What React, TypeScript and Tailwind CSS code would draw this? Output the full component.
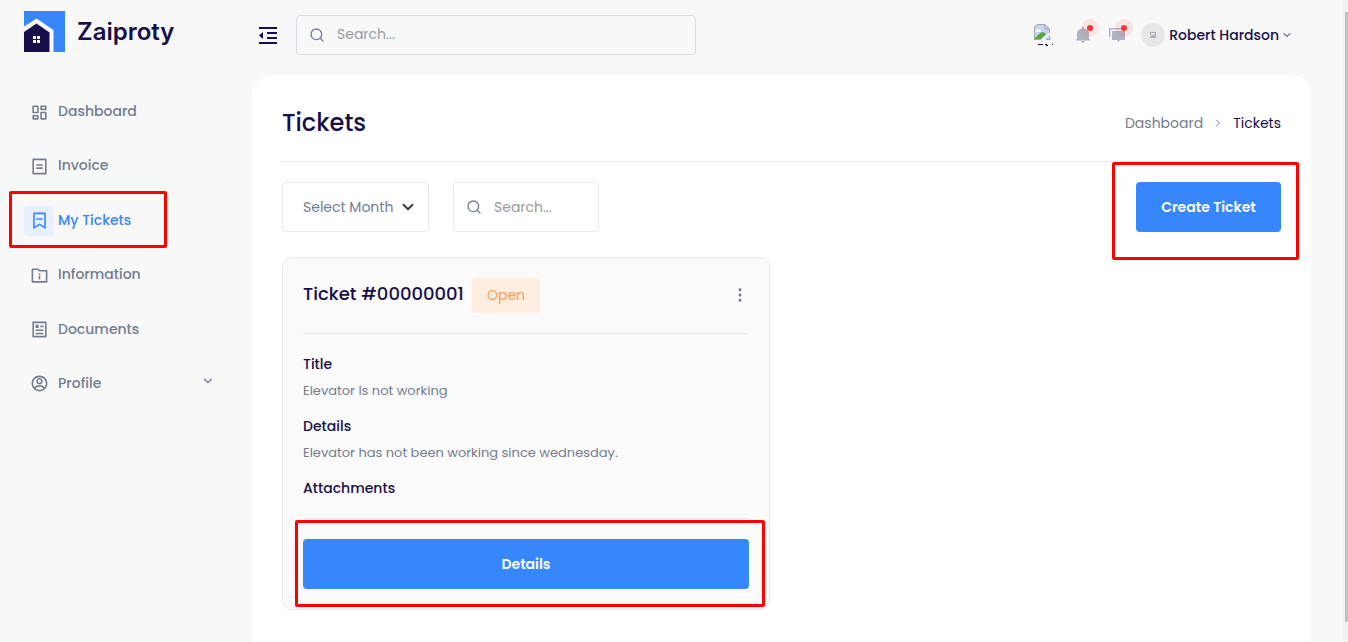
import React from "react";
import {
  RiDashboardLine,
  RiBillLine,
  RiBookmark2Line,
  RiFolderInfoLine,
  RiArticleLine,
  RiAccountCircleLine,
  RiIndentDecrease,
  RiMore2Fill,
} from "react-icons/ri";
import { FiSearch, FiChevronDown, FiChevronRight } from "react-icons/fi";

const navItems = [
  { label: "Dashboard", Icon: RiDashboardLine },
  { label: "Invoice", Icon: RiBillLine },
  { label: "My Tickets", Icon: RiBookmark2Line, active: true },
  { label: "Information", Icon: RiFolderInfoLine },
  { label: "Documents", Icon: RiArticleLine },
  { label: "Profile", Icon: RiAccountCircleLine, expandable: true },
];

function Highlight({ className }: { className: string }) {
  return (
    <span
      aria-hidden="true"
      className={`pointer-events-none absolute rounded-xs border-3 border-[#fe0000] ${className}`}
    />
  );
}

function Logo() {
  return (
    <a href="#" className="flex items-center gap-3">
      <svg width="41" height="41" viewBox="0 0 41 41" aria-hidden="true">
        <path fill="#3686fc" d="M0 0h41v41H0z" />
        <path fill="#f8f8f8" d="M0 15.500 12.500 7.500 29.500 19v22H0z" />
        <path fill="#170f4b" d="M0 21 12.500 12.500 25.500 21.500V41H0z" />
        <path fill="#f8f8f8" d="M9 25h3v3H9zM13 25h3v3h-3zM9 29h3v3H9zM13 29h3v3h-3z" />
      </svg>
      <span className="font-['Inter',sans-serif] text-2xl font-semibold text-[#170f4b]">Zaiproty</span>
    </a>
  );
}

function Sidebar() {
  return (
    <aside className="w-[252px] shrink-0 pt-[11px]">
      <div className="px-6">
        <Logo />
      </div>
      <nav className="mt-[45px] flex h-[302px] flex-col justify-between px-6">
        {navItems.map(({ label, Icon, active, expandable }) => (
          <a
            key={label}
            href="#"
            className={`relative flex items-center gap-1 text-sm font-medium ${
              active ? "text-[#3686fc]" : "text-[#737c90]"
            }`}
          >
            <span
              className={`flex size-[30px] items-center justify-center rounded ${
                active ? "bg-[#e6f0ff]" : ""
              }`}
            >
              <Icon className="size-[19px]" />
            </span>
            <span className="pb-0.5">{label}</span>
            {expandable && <FiChevronDown className="mr-[13px] mb-1.5 ml-auto size-3.5" />}
            {active && <Highlight className="-top-[15px] -bottom-3 -left-[15px] w-[158px]" />}
          </a>
        ))}
      </nav>
    </aside>
  );
}

function BrokenImage() {
  return (
    <svg width="24" height="24" viewBox="0 0 24 24" role="img" aria-label="Language">
      <path fill="#c4d5f6" d="M4 1h8l5 5v10H1V4z" />
      <path fill="#fff" d="M3 8c0-2 2-3 3-1 2-1 3 2 1 2H4c-1 0-2 0-1-1z" />
      <path fill="#56ab37" d="m1 16 6-6 3-1 3 2-5 5z" />
      <path fill="#f8f8f8" d="m8 17 9-8v2l-6 6z" />
      <path fill="none" stroke="#a5a7ac" d="M1.500 15V4l3-2.500H12L16.500 6v4M12 2v4h4M1 16.500h7M13 16.500h4v-3" />
      <path fill="#170f4b" d="M5 21h5v1H5zM12 21h2v1h1v1h-2v-1h-1zM19 21h1v1h-1z" />
    </svg>
  );
}

function AlertDot() {
  return (
    <span className="absolute -top-2 left-1.5 flex size-[18px] items-center justify-center rounded-full bg-[#ff3a3a]/10">
      <span className="size-1.5 rounded-full bg-[#ff3535]" />
    </span>
  );
}

function Header() {
  return (
    <header className="flex h-[75px] items-center pb-[5px]">
      <button type="button" aria-label="Toggle menu" className="ml-1 text-[#170f4b]">
        <RiIndentDecrease className="size-6" />
      </button>
      <label className="ml-4 flex h-10 w-[400px] items-center gap-3 rounded border border-[#d9dce8] px-3">
        <FiSearch className="size-4 shrink-0 text-[#737c90]" />
        <input
          type="text"
          aria-label="Search"
          placeholder="Search..."
          className="min-w-0 flex-1 bg-transparent pb-0.5 text-sm outline-none placeholder:text-[#999a9f]"
        />
      </label>
      <div className="ml-auto flex items-center pr-[50px]">
        <button type="button" aria-label="Language" className="mr-[18px]">
          <BrokenImage />
        </button>
        <button type="button" aria-label="Notifications" className="relative mr-[18px]">
          <svg width="16" height="16" viewBox="0 0 16 16" fill="#aeb3c2" aria-hidden="true">
            <path d="M7 0h2v1.500c3 .500 5 2.500 5 5V12h1v1.500H1V12h1V6.500C2 4 4 2 7 1.500zM6 14h4l-2 2z" />
          </svg>
          <AlertDot />
        </button>
        <button type="button" aria-label="Messages" className="relative mr-4">
          <svg width="16" height="16" viewBox="0 0 16 16" fill="#aeb3c2" aria-hidden="true">
            <path d="M0 1h13v1.500H1.500V10H0zM3 4h13v9h-5l-1.500 2L8 13H3z" />
          </svg>
          <AlertDot />
        </button>
        <button type="button" className="flex items-center gap-1 text-sm font-medium text-[#170f4b]">
          <span className="flex size-6 items-center justify-center rounded-full bg-[#e8e8e8]">
            <svg width="6" height="6" viewBox="0 0 6 6" aria-hidden="true">
              <path fill="#a9adb8" d="M0 0h6v1H0zM0 1h1v2H0zM5 1h1v2H5zM0 5l2-2 1 1 1-2 2 2v2H0z" />
            </svg>
          </span>
          <span className="flex items-center gap-0.5">
            Robert Hardson
            <FiChevronDown className="size-3" />
          </span>
        </button>
      </div>
    </header>
  );
}

function TicketCard() {
  return (
    <article className="w-full max-w-[488px] rounded-[10px] border border-[#e8e9eb] bg-[#fafafa] p-5">
      <div className="flex items-center border-b border-[#e8e9eb] pb-5">
        <h2 className="pb-1 text-lg font-medium text-[#170f4b]">Ticket #00000001</h2>
        <span className="ml-2 rounded bg-[#ffeee0] px-[15px] py-1.5 text-sm leading-[23px] text-[#ff9b55]">
          Open
        </span>
        <button type="button" aria-label="Ticket actions" className="ml-auto pb-0.5 text-[#737c90]">
          <RiMore2Fill className="size-[18px]" />
        </button>
      </div>
      <dl className="border-b border-[#e8e9eb] pt-[19px] pb-[19px]">
        <dt className="text-sm leading-[22px] font-medium text-[#170f4b]">Title</dt>
        <dd className="mt-[5px] mb-[13px] text-[13px] leading-[22px] text-[#737c90]">Elevator Is not working</dd>
        <dt className="text-sm leading-[22px] font-medium text-[#170f4b]">Details</dt>
        <dd className="mt-[5px] mb-[13px] text-[13px] leading-[22px] text-[#737c90]">
          Elevator has not been working since wednesday.
        </dd>
        <dt className="text-sm leading-[22px] font-medium text-[#170f4b]">Attachments</dt>
      </dl>
      <div className="relative mt-5">
        <button type="button" className="h-[50px] w-full rounded bg-[#3686fc] text-sm font-semibold text-white">
          Details
        </button>
        <Highlight className="-top-[19px] -right-4 -bottom-[18px] -left-2" />
      </div>
    </article>
  );
}

export default function App() {
  return (
    <div className="flex h-screen overflow-hidden bg-[#f8f8f8] font-['Poppins','Inter',sans-serif] text-[#737c90]">
      <Sidebar />
      <div className="flex min-w-0 flex-1 flex-col">
        <Header />
        <main className="mr-8 flex-1 rounded-t-[20px] bg-white px-[30px] pt-[30px]">
          <div className="flex items-center justify-between border-b border-[#e8e9eb] pb-5">
            <h1 className="text-2xl leading-9 font-medium text-[#170f4b]">Tickets</h1>
            <nav aria-label="Breadcrumb" className="flex items-center gap-[9px] text-sm">
              <a href="#">Dashboard</a>
              <FiChevronRight className="size-3" />
              <span className="text-[#170f4b]">Tickets</span>
            </nav>
          </div>
          <div className="mt-5 flex items-center gap-6">
            <div className="relative w-[147px]">
              <select
                aria-label="Select Month"
                className="h-[50px] w-full appearance-none rounded border border-[#e8e9eb] bg-white pl-5 text-sm outline-none"
              >
                <option>Select Month</option>
              </select>
              <FiChevronDown className="pointer-events-none absolute top-4 right-3 size-[18px] stroke-[2.5] text-[#343a40]" />
            </div>
            <label className="flex h-[50px] w-[146px] items-center gap-3 rounded border border-[#e8e9eb] px-3">
              <FiSearch className="size-4 shrink-0" />
              <input
                type="text"
                aria-label="Search tickets"
                placeholder="Search..."
                className="min-w-0 flex-1 bg-transparent text-sm outline-none placeholder:text-[#999a9f]"
              />
            </label>
            <div className="relative ml-auto">
              <button type="button" className="h-[50px] w-[145px] rounded bg-[#3686fc] text-sm font-semibold text-white">
                Create Ticket
              </button>
              <Highlight className="-top-5 -right-[18px] -bottom-7 -left-6" />
            </div>
          </div>
          <div className="mt-[25px]">
            <TicketCard />
          </div>
        </main>
      </div>
      <div aria-hidden="true" className="flex w-[5px] shrink-0 justify-end bg-[#f1f1f1] pt-3 pb-5">
        <div className="w-[3px] bg-[#c1c1c1]" />
      </div>
    </div>
  );
}
